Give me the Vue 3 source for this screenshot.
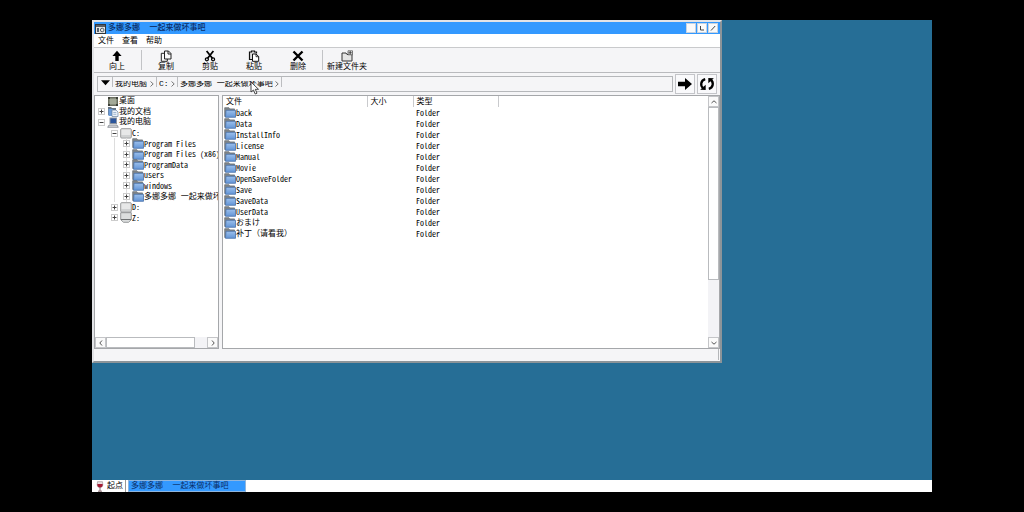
<script setup>
const title = '多娜多娜  一起来做坏事吧'
const menus = ['文件', '查看', '帮助']
const crumbs = [
  { name: '我的电脑', cls: 'wide' },
  { name: 'C:', cls: 'drive' },
  { name: '多娜多娜 一起来做坏事吧', cls: 'folder' }
]
const tree = [
  { name: '桌面', depth: 0, icon: 'desktop', sign: '' },
  { name: '我的文档', depth: 0, icon: 'docs', sign: '+' },
  { name: '我的电脑', depth: 0, icon: 'pc', sign: '-' },
  { name: 'C:', depth: 1, icon: 'disk', sign: '-' },
  { name: 'Program Files', depth: 2, icon: 'folder', sign: '+' },
  { name: 'Program Files (x86)', depth: 2, icon: 'folder', sign: '+' },
  { name: 'ProgramData', depth: 2, icon: 'folder', sign: '+' },
  { name: 'users', depth: 2, icon: 'folder', sign: '+' },
  { name: 'windows', depth: 2, icon: 'folder', sign: '+' },
  { name: '多娜多娜 一起来做坏', depth: 2, icon: 'folder', sign: '+' },
  { name: 'D:', depth: 1, icon: 'disk', sign: '+' },
  { name: 'Z:', depth: 1, icon: 'net', sign: '+' }
]
const files = ['back', 'Data', 'InstallInfo', 'License', 'Manual', 'Movie', 'OpenSaveFolder', 'Save', 'SaveData', 'UserData', 'おまけ', '补丁（请看我）']
const latin = (s) => /^[\x20-\x7e]+$/.test(s)
</script>

<template>
  <svg class="defs" aria-hidden="true">
    <defs>
      <linearGradient id="blue" x1="0" y1="0" x2="0" y2="1">
        <stop offset="0" stop-color="#9cc0ec" />
        <stop offset="1" stop-color="#6294d6" />
      </linearGradient>
      <symbol id="folder" viewBox="0 0 12 11">
        <path d="M.7 9.500V.7h4.200l1 1.200H10.500v7.600z" fill="#80868a" stroke="#62696e" stroke-width=".7" />
        <path d="M2 3.300h9.500v7H1.500z" fill="url(#blue)" stroke="#4870a8" stroke-width=".8" />
      </symbol>
      <symbol id="desktop" viewBox="0 0 12 11">
        <rect x="1" y="1" width="10" height="9" fill="#6b6f60" />
        <rect x="2.5" y="2.5" width="7" height="6" fill="#a4aa98" />
        <path d="M1 1h2v2H1zM9 1h2v2H9zM1 8h2v2H1zM9 8h2v2H9z" fill="#3c3f36" />
      </symbol>
      <symbol id="docs" viewBox="0 0 12 11">
        <path d="M1 9V1h3l1 1h4v7z" fill="#657485" />
        <path d="M1.5 3H6v7H1.5z" fill="#6b9bd8" />
        <path d="M5 4h4l2 2v4.500H5z" fill="#edf3fa" stroke="#69839f" stroke-width=".7" />
        <path d="M6.300 6.500h3M6.300 8.300h3" stroke="#7f9dbe" stroke-width=".7" />
      </symbol>
      <symbol id="pc" viewBox="0 0 12 11">
        <rect x="3" y="1" width="6.500" height="5.500" fill="#2c569c" stroke="#8c95a2" />
        <path d="M2 8h8l1.300 2.300H.7z" fill="#d5d8dc" stroke="#727982" stroke-width=".7" />
      </symbol>
      <symbol id="disk" viewBox="0 0 12 11">
        <rect x=".7" y=".7" width="10.600" height="9.300" rx="1" fill="#e7e8e8" stroke="#7f8283" stroke-width=".8" />
        <path d="M1.200 8h9.600" stroke="#aeb1b2" stroke-width=".8" />
      </symbol>
      <symbol id="net" viewBox="0 0 12 11">
        <path d="M.7.7h10.600v7L8.500 10.300h-5L.7 7.700z" fill="#dcdede" stroke="#7f8283" stroke-width=".8" />
        <path d="M1 7.500h10" stroke="#6e7172" />
      </symbol>
    </defs>
  </svg>
  <div class="screen">
    <main class="desktop">
      <section class="window">
        <header class="titlebar">
          <svg class="app" viewBox="0 0 11 11">
            <rect x=".5" y="1.5" width="10" height="9" fill="#e6e6e4" stroke="#30363d" />
            <path d="M1 3h9" stroke="#343c46" stroke-width="1.6" />
            <path d="M2 5h2v4H2z" fill="#55616d" />
            <circle cx="7.2" cy="7" r="1.8" fill="none" stroke="#54606d" />
          </svg>
          <h1>{{ title }}</h1>
          <div class="controls">
            <button aria-label="最小化"></button>
            <button aria-label="最大化"><svg viewBox="0 0 8 8"><path d="M2.5 2v4H6" /></svg></button>
            <button aria-label="关闭"><svg viewBox="0 0 8 8"><path d="M2 6.5 6.2 2" /></svg></button>
          </div>
        </header>
        <nav class="menubar"><button v-for="m in menus" :key="m">{{ m }}</button></nav>

        <div class="toolbar">
          <button class="tool">
            <svg viewBox="0 0 12 12"><path d="M6 .8 10.6 6H7.7v5H4.3V6H1.4z" fill="#000" /></svg>向上
          </button>
          <i class="sep"></i>
          <button class="tool">
            <svg viewBox="0 0 12 12"><path d="M4.5 1h4L11 3.5V9H4.5zM8 1v3h3M4.5 3.3H1.3v8h6V9" fill="#fafafa" stroke="#222" /></svg>复制
          </button>
          <button class="tool">
            <svg viewBox="0 0 12 12"><path d="M2.6 1 8.4 8.2M9.4 1 3.6 8.2" stroke="#000" stroke-width="1.8" /><circle cx="2.9" cy="9.3" r="1.5" fill="none" stroke="#000" stroke-width="1.3" /><circle cx="9.1" cy="9.3" r="1.5" fill="none" stroke="#000" stroke-width="1.3" /></svg>剪贴
          </button>
          <button class="tool">
            <svg viewBox="0 0 12 12"><path d="M4 9.5H1.5V2h2V1h3v1h2v1.5" fill="#ddd" stroke="#111" stroke-width="1.2" /><path d="M4.5 4H8l2.7 2.5v4.8H4.5z" fill="#fff" stroke="#111" /><path d="M8 4v2.7h2.7" fill="none" stroke="#111" stroke-width=".8" /></svg>粘贴
          </button>
          <button class="tool">
            <svg viewBox="0 0 12 12"><path d="m1.5 1.5 9 9M10.5 1.5l-9 9" stroke="#000" stroke-width="2.4" /></svg>删除
          </button>
          <i class="sep"></i>
          <button class="tool">
            <svg viewBox="0 0 12 12"><path d="M1 3h4l1 1.500h5V11H1z" fill="#e5e5e5" stroke="#333" /><path d="M7 .8h4.500v4H7z" fill="#f5f5f5" stroke="#444" stroke-width=".7" /><path d="M9.200 1v3.400M7.500 2.800h3.400" stroke="#222" stroke-width=".8" /></svg>新建文件夹
          </button>
        </div>

        <div class="address">
          <div class="path">
            <button class="drop" aria-label="历史"><svg viewBox="0 0 10 6"><path d="M0 0h10L5 5.5z" /></svg></button>
            <button v-for="c in crumbs" :key="c.name" class="crumb" :class="c.cls">
              <span>{{ c.name }}</span>
              <svg viewBox="0 0 4 6"><path d="m.5.5 2.7 2.4L.5 5.5" /></svg>
            </button>
          </div>
          <button class="go" aria-label="转到"><svg viewBox="0 0 16 14"><path d="M1 4.7h7V1l7 6-7 6V9.3H1z" /></svg></button>
          <button class="go" aria-label="刷新">
            <svg viewBox="0 0 16 14">
              <path d="M6.2 2.2C1.4 3.5 1.3 8.7 4 11" fill="none" stroke="#000" stroke-width="2.3" />
              <path d="M1.2 12.8 6.7 13V7.8z" />
              <path d="M9.8 11.8c4.8-1.3 4.9-6.5 2.2-8.8" fill="none" stroke="#000" stroke-width="2.3" />
              <path d="M14.8 1.2 9.3 1v5.2z" />
            </svg>
          </button>
        </div>

        <div class="panes">
          <aside class="treepane">
            <ul class="tree">
              <li v-for="n in tree" :key="n.name + n.depth" :class="'d' + n.depth">
                <button v-if="n.sign" class="toggle" :aria-label="'展开 ' + n.name">
                  <svg viewBox="0 0 7 7"><rect x=".5" y=".5" width="6" height="6" /><path :d="n.sign === '+' ? 'M1.5 3.5h4M3.5 1.5v4' : 'M1.5 3.5h4'" /></svg>
                </button>
                <i v-else class="toggle"></i>
                <svg class="icon"><use :href="'#' + n.icon" /></svg>
                <span :class="{ latin: latin(n.name) }">{{ n.name }}</span>
              </li>
            </ul>
            <div class="hscroll">
              <button aria-label="向左"><svg viewBox="0 0 8 8"><path d="M5 1.5 2.8 4 5 6.5" /></svg></button>
              <div class="track"><div class="thumb"></div></div>
              <button aria-label="向右"><svg viewBox="0 0 8 8"><path d="M3 1.5 5.2 4 3 6.5" /></svg></button>
            </div>
          </aside>
          <section class="listpane">
            <table>
              <thead><tr><th class="c1">文件</th><th class="c2">大小</th><th class="c3">类型</th><th class="c4"></th></tr></thead>
              <tbody>
                <tr v-for="f in files" :key="f">
                  <td><div class="name"><svg class="icon"><use href="#folder" /></svg><span :class="{ latin: latin(f) }">{{ f }}</span></div></td>
                  <td></td>
                  <td class="type latin">Folder</td>
                  <td></td>
                </tr>
              </tbody>
            </table>
            <div class="vscroll">
              <button aria-label="向上滚动"><svg viewBox="0 0 8 8"><path d="M1.5 5 4 2.8 6.5 5" /></svg></button>
              <div class="track"><div class="thumb"></div></div>
              <button aria-label="向下滚动"><svg viewBox="0 0 8 8"><path d="M1.5 3 4 5.2 6.5 3" /></svg></button>
            </div>
          </section>
        </div>
        <footer class="status"><div></div></footer>
      </section>

      <svg class="cursor" viewBox="0 0 10 14"><path d="M1 1v10l2.5-2 1.7 4 1.8-.8L5.300 8.300H8.500z" fill="#fff" stroke="#333" stroke-width=".9" /></svg>

      <nav class="taskbar">
        <button class="start">
          <svg viewBox="0 0 8 11"><path d="M1.5.7h5l.3 3.3C6.500 6 5.200 6.500 4 6.500S1.500 6 1.200 4z" fill="#e8dde0" stroke="#8d8588" stroke-width=".6" /><path d="M1.300 3h5.400C7 5.500 5.500 6.500 4 6.500S1 5.500 1.300 3z" fill="#a51d35" /><path d="M4 6.500V10M2 10.200h4" stroke="#77585f" stroke-width=".9" /></svg>起点
        </button>
        <button class="task">{{ title }}</button>
      </nav>
    </main>
  </div>
</template>

<style>
body {
  margin: 0;
  background: #000;
}
</style>

<style scoped>
* {
  box-sizing: border-box;
}
.defs {
  position: absolute;
  width: 0;
  height: 0;
}
.screen {
  min-height: 100vh;
  padding: 20px 92px;
  display: flex;
  background: #000;
  font: 8px/10px "Liberation Mono", "Noto Sans CJK SC", monospace;
  color: #000;
}
button {
  margin: 0;
  padding: 0;
  border: 0;
  background: none;
  font: inherit;
  color: inherit;
  white-space: nowrap;
}
svg {
  display: block;
  flex: none;
}
.desktop {
  position: relative;
  flex: 1;
  display: flex;
  flex-direction: column;
  background: #266e96;
}
.window {
  width: 75%;
  background: #f5f5f7;
  border: 2px solid #e2e3e6;
  border-right-color: #8c9499;
  border-bottom-color: #8c9499;
}
.titlebar {
  height: 12px;
  display: flex;
  align-items: center;
  background: #3399ff;
  padding: 0 2px 0 1px;
  color: #0a2d66;
}
.app {
  width: 11px;
  height: 11px;
}
h1 {
  flex: 1;
  margin: 0 0 0 2px;
  font: inherit;
  font-weight: 500;
  white-space: pre;
}
.controls {
  display: flex;
  gap: 1px;
}
.controls button {
  width: 10px;
  height: 10px;
  background: #fafafa;
  border: 1px solid #c9d3df;
}
.controls svg {
  width: 8px;
  height: 8px;
  fill: none;
  stroke: #444;
}
.menubar {
  height: 14px;
  display: flex;
  gap: 8px;
  padding: 0 4px;
  background: #fff;
  border-bottom: 1px solid #c9cacc;
}
.toolbar {
  height: 25px;
  display: flex;
  align-items: center;
  border-bottom: 1px solid #b9babd;
}
.tool {
  width: 44px;
  display: flex;
  flex-direction: column;
  align-items: center;
  line-height: 9px;
}
.tool:first-child {
  margin-left: 1px;
}
.tool svg {
  width: 12px;
  height: 12px;
}
.sep {
  width: 1px;
  height: 20px;
  margin: 0 2px;
  background: #c2c3c6;
}
.address {
  height: 22px;
  display: flex;
  align-items: center;
  gap: 2px;
  padding: 0 3px;
}
.path {
  flex: 1;
  height: 16px;
  display: flex;
  align-items: flex-start;
  border: 1px solid #b5b7ba;
  background: #f5f5f7;
}
.drop {
  width: 14px;
  height: 12px;
  display: flex;
  align-items: center;
  justify-content: center;
}
.drop svg {
  width: 9px;
  height: 6px;
}
.crumb {
  height: 10px;
  display: flex;
  align-items: flex-end;
  justify-content: space-between;
  padding: 0 2px;
  border-left: 1px solid #bcbdc0;
}
.crumb span {
  height: 6px;
  line-height: 6px;
  overflow: hidden;
}
.crumb svg {
  width: 4px;
  height: 6px;
  fill: none;
  stroke: #555;
  stroke-width: 0.8;
}
.wide {
  width: 44px;
}
.drive {
  width: 21px;
}
.folder {
  width: 105px;
  border-right: 1px solid #bcbdc0;
}
.go {
  width: 20px;
  height: 20px;
  display: grid;
  place-items: center;
  border: 1px solid #c4c5c9;
  background: #f9f9fb;
}
.go svg {
  width: 16px;
  height: 14px;
}
.panes {
  height: 254px;
  display: flex;
  gap: 3px;
}
.treepane,
.listpane {
  background: #fff;
  border: 1px solid #a5a7aa;
}
.treepane {
  width: 125px;
  display: flex;
  flex-direction: column;
  justify-content: space-between;
  overflow: hidden;
}
.tree {
  height: 127px;
  margin: 0;
  padding: 0;
  list-style: none;
  display: grid;
  grid-auto-rows: 1fr;
}
.tree li {
  display: flex;
  align-items: center;
  padding-left: 3px;
  white-space: nowrap;
  min-height: 0;
}
.tree .d1 {
  padding-left: 16px;
}
.tree .d2 {
  padding-left: 28px;
  background: linear-gradient(#ddd, #ddd) 19px 0 / 1px 100% no-repeat, linear-gradient(#ddd, #ddd) 31px 0 / 1px 100% no-repeat;
}
.toggle {
  width: 7px;
  flex: none;
  margin-right: 2px;
}
.toggle svg {
  width: 7px;
  height: 7px;
}
.toggle rect {
  fill: #fff;
  stroke: #ccc;
}
.toggle path {
  stroke: #444;
}
.icon {
  width: 12px;
  height: 11px;
}
.latin {
  font-family: "Noto Sans Mono CJK SC", "Liberation Mono", monospace;
  font-size: 8px;
}
.hscroll {
  height: 11px;
  display: flex;
}
.hscroll button,
.vscroll button {
  width: 11px;
  height: 11px;
  display: grid;
  place-items: center;
  border: 1px solid #c4c5c8;
  background: #fafafa;
}
.hscroll button svg,
.vscroll button svg {
  width: 8px;
  height: 8px;
  fill: none;
  stroke: #555;
}
.track {
  flex: 1;
  background: #f3f3f6;
}
.thumb {
  background: #fff;
  border: 1px solid #b9bbbe;
}
.hscroll .thumb {
  width: 88%;
  height: 11px;
}
.listpane {
  flex: 1;
  display: flex;
  align-items: stretch;
}
table {
  flex: 1;
  align-self: flex-start;
  border-collapse: collapse;
  table-layout: fixed;
  width: 0;
}
th {
  height: 11px;
  padding: 0 0 0 3px;
  font-weight: 400;
  text-align: left;
  border-right: 1px solid #c9cacd;
}
.c1 {
  width: 144px;
}
.c2 {
  width: 46px;
}
.c3 {
  width: 85px;
}
.c4 {
  border: 0;
}
td {
  height: 11px;
  padding: 0;
}
.type {
  padding-left: 3px;
}
.name {
  height: 11px;
  display: flex;
  align-items: center;
  padding-left: 1px;
  white-space: nowrap;
}
.vscroll {
  width: 11px;
  display: flex;
  flex-direction: column;
}
.vscroll .thumb {
  height: 75%;
}
.status {
  height: 12px;
  padding: 0 1px 1px;
}
.status div {
  height: 11px;
  border-right: 1px solid #b4b6b9;
}
.cursor {
  position: absolute;
  left: 158px;
  top: 61px;
  width: 10px;
  height: 14px;
}
.taskbar {
  height: 12px;
  margin-top: auto;
  display: flex;
  gap: 2px;
  background: #fff;
}
.start {
  width: 34px;
  display: flex;
  align-items: center;
  gap: 3px;
  padding-left: 4px;
  border-right: 1px solid #999;
}
.start svg {
  width: 8px;
  height: 11px;
}
.task {
  width: 118px;
  padding-left: 2px;
  border: 1px solid #8fb5dd;
  background: #3399ff;
  color: #0a2d66;
  text-align: left;
  white-space: pre;
}
</style>
